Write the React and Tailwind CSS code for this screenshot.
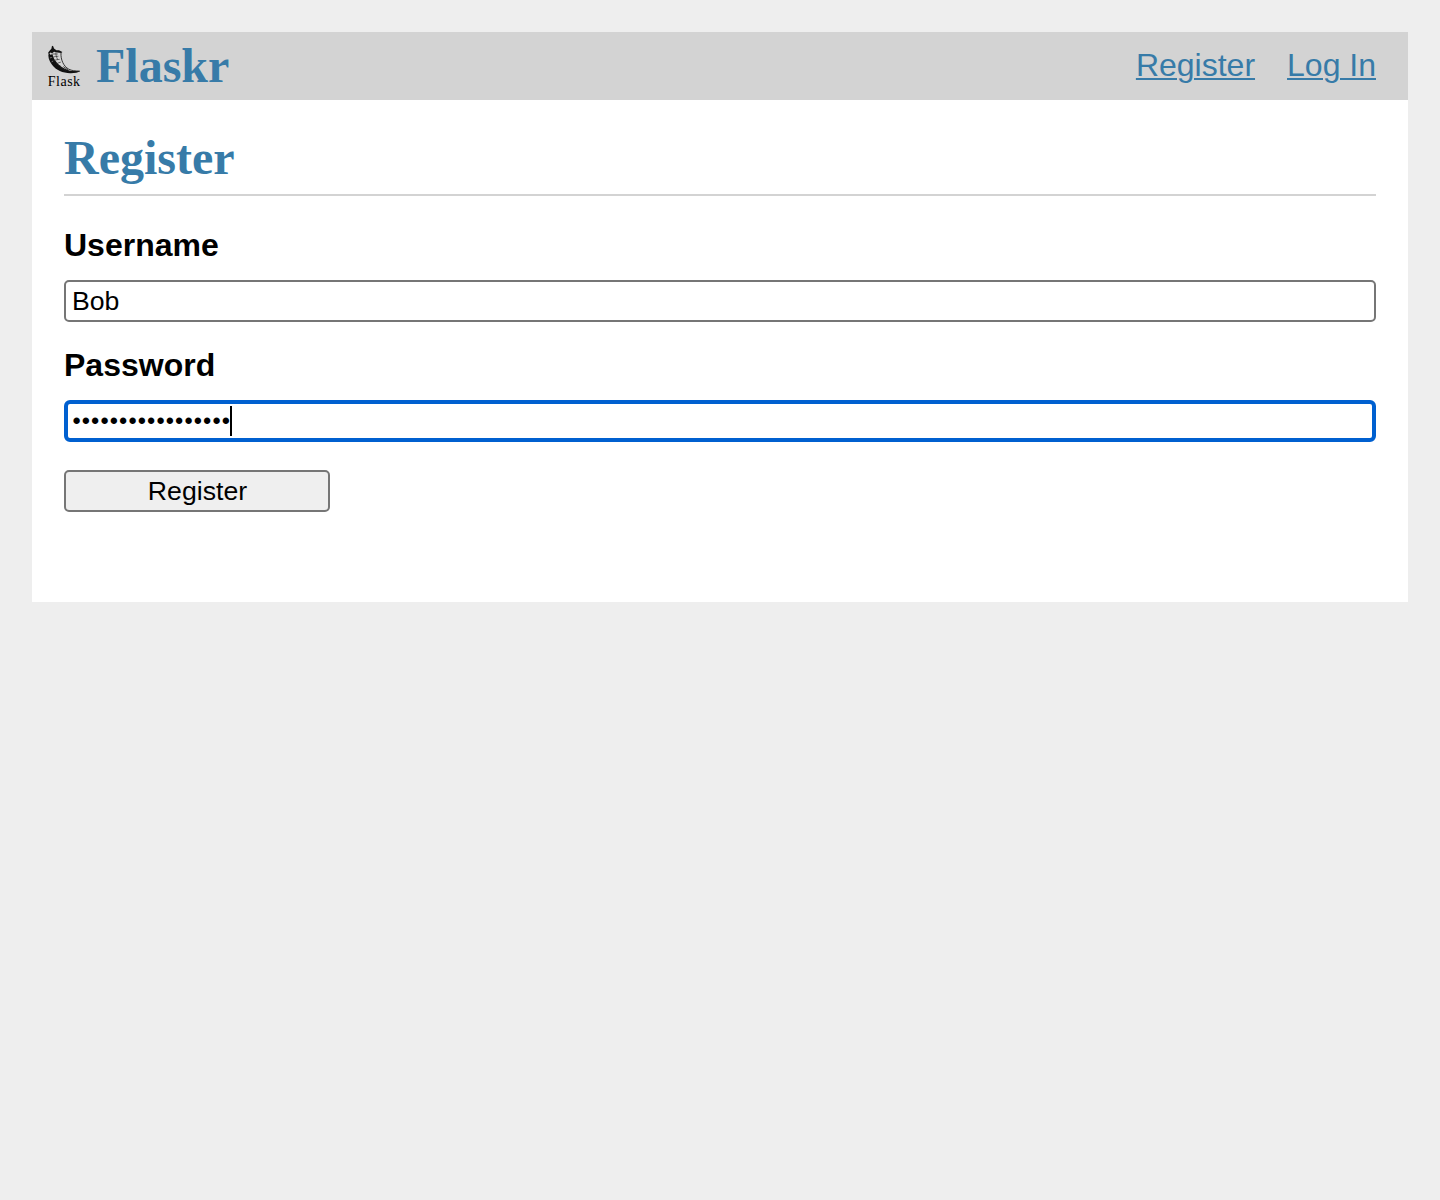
function FlaskLogo() {
  return (
    <svg className="h-[42px] w-8 shrink-0 overflow-visible" viewBox="0 0 32 42" aria-label="Flask">
      <path d="M0.2 7.4 L2.2 5 L3.4 3.8 L4 0.8 L5.2 1.2 L6 3.4 L8.4 5.2 L11 5.2 L14.4 7 L13.2 7.9 L9.4 7.6 L6 6.8 L4.2 8.2 L2.4 7.6 L0.8 9 Z" fill="#111" />
      <path
        d="M0.8 7.8 C-0.4 11.4 0.8 15.6 4.2 20 C8 25.2 14.8 28 22.2 28.2 C26.6 28.3 30 27.6 32.2 26 C27.4 26.2 24 26.2 20.4 25.2 C15.6 23.8 11.4 21 8.8 17.6 C6.6 14.8 5.2 12.8 4.6 9.6 L2.8 10 Z"
        fill="#111"
      />
      <path d="M13 7.8 C12.6 14.6 15.4 21.2 20.8 24.2 C23.6 25.7 27.6 26.1 31.8 26.1" fill="none" stroke="#222" strokeWidth="0.9" />
      <path
        d="M3 9.4 C6 8.6 8.4 9.2 9.8 9 M4.6 12.4 C7 11.2 8.6 11.6 10.4 11.2 M6 15.6 C8.2 14.6 9.6 14.6 11.6 14.4 M8.4 18.8 C10 17.8 11.4 17.6 12.8 17.2 M8 7.2 C7.6 9.6 8.4 12 9.8 14.8"
        fill="none"
        stroke="#333"
        strokeWidth="0.7"
      />
      <path d="M1.8 13 L3.8 12.4 M3.6 16.8 L5.2 16" stroke="#d3d3d3" strokeWidth="0.5" />
      <path d="M9.8 20 L12.4 20.8 M12 22 L17.6 25.2 M15.4 21.6 L20.6 25.4" stroke="#222" strokeWidth="0.8" />
      <text x="-0.3" y="40.8" textLength="32.4" lengthAdjust="spacing" fontSize="14" fill="#000" className="font-['Liberation_Serif',serif]">
        Flask
      </text>
    </svg>
  );
}

function Label({ htmlFor, children }) {
  return (
    <label htmlFor={htmlFor} className="mb-4 block h-[38px] text-[32px]/[38px] font-bold">
      {children}
    </label>
  );
}

export default function App() {
  return (
    <div className="min-h-screen bg-[#eee] p-8 font-['Liberation_Sans',sans-serif] text-black">
      <nav className="flex h-[68px] items-center bg-[#d3d3d3] px-4 text-[#377ba8]">
        <FlaskLogo />
        <h1 className="ml-4 flex-auto font-['Liberation_Serif',serif] text-[48px]/[68px] font-bold">Flaskr</h1>
        <div className="mr-4 flex h-[68px] gap-8 text-[32px]/[66px]">
          <a href="#register" className="underline decoration-2 underline-offset-[2px]">Register</a>
          <a href="#login" className="underline decoration-2 underline-offset-[2px]">Log In</a>
        </div>
      </nav>
      <main className="h-[502px] bg-white px-8 pt-6">
        <header className="h-[72px] border-b-2 border-[#d3d3d3]">
          <h1 className="font-['Liberation_Serif',serif] text-[48px]/[68px] font-bold text-[#377ba8]">Register</h1>
        </header>
        <form className="pt-[30px]" onSubmit={(e) => e.preventDefault()}>
          <Label htmlFor="username">Username</Label>
          <input
            id="username"
            defaultValue="Bob"
            className="mb-6 block h-[42px] w-full rounded-[5px] border-2 border-[#767676] bg-white px-1.5 text-[26.667px]/[30px] outline-none"
          />
          <Label htmlFor="password">Password</Label>
          <div className="relative mb-7 h-[42px]">
            <input
              id="password"
              type="password"
              defaultValue="correcthorsebatte"
              className="block h-[42px] w-full rounded-[6px] border-4 border-[#0060d0] bg-white pr-1 pl-[4.4px] text-[23.5px]/[30px] tracking-[1.11px] outline-none"
            />
            <span className="absolute top-1.5 left-[166px] h-[30px] w-0.5 bg-black" />
          </div>
          <button type="submit" className="block h-[42px] w-[266px] rounded-[5px] border-2 border-[#767676] bg-[#efefef] pl-px text-[26.667px]/[30px]">
            Register
          </button>
        </form>
      </main>
    </div>
  );
}
